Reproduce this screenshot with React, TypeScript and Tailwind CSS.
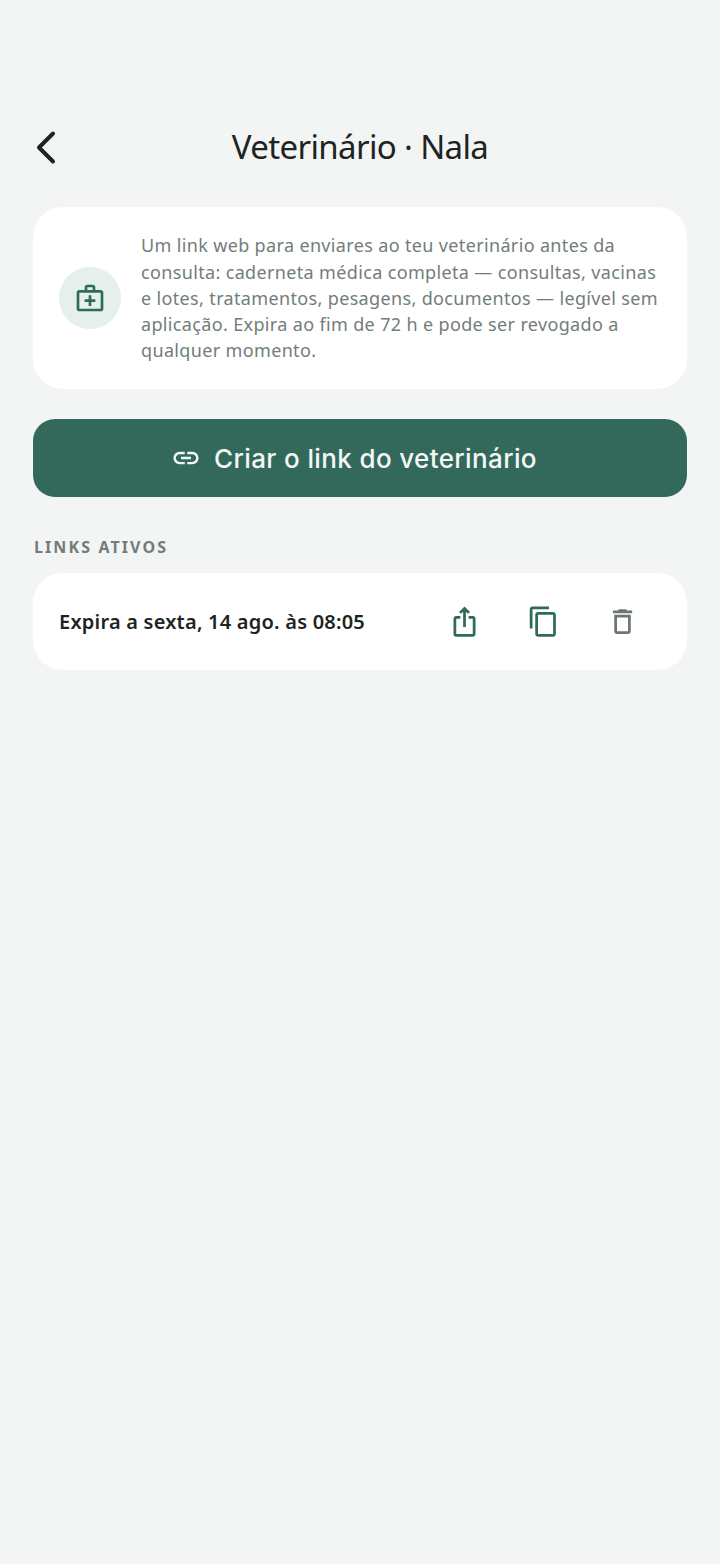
import React from 'react';
import { MdContentCopy, MdLink, MdOutlineDelete, MdOutlineIosShare, MdOutlineMedicalServices } from 'react-icons/md';

const body = "font-['Noto_Sans',sans-serif]";

const App: React.FC = () => {
  return (
    <div className={`min-h-[1564px] w-[720px] bg-[#f3f5f4] px-[33px] pt-[120px] ${body}`}>
      {/* Header */}
      <header className="relative flex h-[54px] items-center justify-center">
        <button className="absolute left-0 top-[10px] text-[#1d2422]" aria-label="Voltar">
          <svg width="26" height="36" viewBox="0 0 26 36" fill="none">
            <path d="M20 3.5 L6 17.5 L20 31.5" stroke="currentColor" strokeWidth="4" strokeLinecap="round" strokeLinejoin="round" />
          </svg>
        </button>
        <h1 className="text-[33px] leading-[54px] tracking-[-0.65px] text-[#1d2422]">Veterinário · Nala</h1>
      </header>

      {/* Info card */}
      <section className="mt-[33px] flex h-[182px] items-center gap-5 rounded-[30px] bg-white pl-[26px] pr-[20px]">
        <div className="flex size-[62px] shrink-0 items-center justify-center rounded-full bg-[#e5efec] text-[#2f6b5a]">
          <MdOutlineMedicalServices size={32} />
        </div>
        <p className="text-[18px] leading-[26.2px] tracking-[0.35px] text-[#727d79]">
          Um link web para enviares ao teu veterinário antes da consulta: caderneta médica completa — consultas, vacinas e lotes, tratamentos, pesagens, documentos — legível sem aplicação. Expira ao fim de 72 h e pode ser revogado a qualquer momento.
        </p>
      </section>

      {/* Create button */}
      <button className="mt-[30px] flex h-[78px] w-full items-center justify-center gap-[13px] rounded-[22px] bg-[#32695b] pr-3 text-[#f4f7f6]">
        <MdLink size={30} />
        <span className="font-['Inter',sans-serif] text-[26px] font-medium tracking-[0.37px]">Criar o link do veterinário</span>
      </button>

      {/* Active links */}
      <h2 className="mt-[39px] pl-px text-[16px] font-bold leading-[22px] tracking-[2.1px] text-[#727d79]">LINKS ATIVOS</h2>
      <div className="mt-[15px] flex h-[97px] items-center rounded-[30px] bg-white pl-[26px]">
        <span className="text-[20px] font-semibold tracking-[0.22px] text-[#1d2422]">Expira a sexta, 14 ago. às 08:05</span>
        <div className="ml-auto flex items-center gap-[46px] pr-[48.5px]">
          <MdOutlineIosShare size={33} className="text-[#2f6b5a]" />
          <MdContentCopy size={33} className="text-[#2f6b5a]" />
          <MdOutlineDelete size={33} className="text-[#6c7773]" />
        </div>
      </div>
    </div>
  );
};

export default App;
